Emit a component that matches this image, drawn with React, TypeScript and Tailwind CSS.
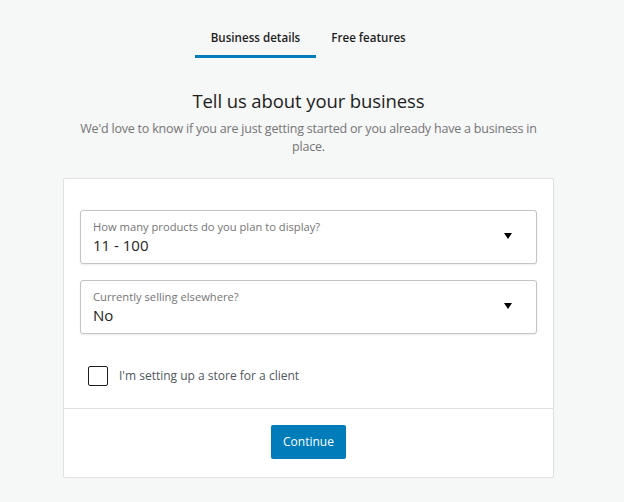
import React from "react";

function Select({ label, value }: { label: string; value: string }) {
  return (
    <div className="flex items-center h-[54px] border border-[#c3c4c7] rounded-[3px] bg-white pl-[12px] pr-[23px] shadow-[0_1px_2px_rgba(0,0,0,0.08)]">
      <div className="flex-1 flex flex-col">
        <span className="text-[11.2px] leading-[16px] text-[#757575]">{label}</span>
        <span className="text-[15px] leading-[20px] text-[#1e1e1e]">{value}</span>
      </div>
      <svg width="10" height="6" viewBox="0 0 10 6" className="mb-[2px]">
        <path d="M1 0 L9 0 L5 6 Z" fill="#000" />
      </svg>
    </div>
  );
}

export default function App() {
  return (
    <div className="min-h-[502px] w-[624px] bg-[#f6f7f7] flex flex-col items-center pr-[7px]" style={{ fontFamily: '"Open Sans", "Noto Sans", sans-serif' }}>
      <div className="flex pt-[26px] ml-[-1px]">
        <div className="w-[121px] flex flex-col items-center">
          <span className="text-[11.6px] font-semibold text-[#1e1e1e] leading-[20px] mt-[2px]">Business details</span>
          <div className="h-[3px] w-full bg-[#007cba] mt-[7px]" />
        </div>
        <div className="w-[105px] flex flex-col items-center">
          <span className="text-[11.6px] font-semibold text-[#1e1e1e] leading-[20px] mt-[2px]">Free features</span>
        </div>
      </div>
      <h1 className="mt-[30px] text-[18.5px] leading-[26px] text-[#1e1e1e] tracking-[-0.1px]">Tell us about your business</h1>
      <p className="mt-[6px] w-[470px] text-center text-[12.5px] leading-[18px] text-[#757575] tracking-[-0.2px]">
        We'd love to know if you are just getting started or you already have a business in place.
      </p>
      <div className="mt-[22px] w-[491px] bg-white border border-[#e0e0e0] rounded-[2px]">
        <div className="px-[16px] pt-[31px] pb-[22px] flex flex-col gap-[16px]">
          <Select label="How many products do you plan to display?" value="11 - 100" />
          <Select label="Currently selling elsewhere?" value="No" />
          <div className="flex items-center mt-[16px] pl-[8px]">
            <div className="w-[20px] h-[20px] border-[1.5px] border-[#1e1e1e] rounded-[2px]" />
            <span className="ml-[11px] text-[12px] text-[#50575e]">I'm setting up a store for a client</span>
          </div>
        </div>
        <div className="border-t border-[#e0e0e0] flex justify-center pt-[16px] pb-[18px]">
          <button className="h-[34px] px-[12px] bg-[#007cba] rounded-[2px] text-white text-[12px]">Continue</button>
        </div>
      </div>
    </div>
  );
}
